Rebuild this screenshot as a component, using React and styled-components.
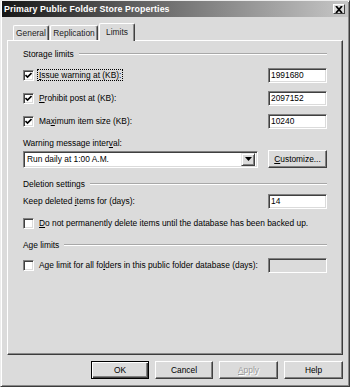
import React from "react";
import styled, { createGlobalStyle } from "styled-components";

const GlobalStyle = createGlobalStyle`
  html, body {
    margin: 0;
    padding: 0;
    background: #d9d9d9;
  }
  body {
    font-family: "Liberation Sans", Arial, sans-serif;
    font-size: 8.4px;
    color: #000;
  }
`;

function App() {
  return (
    <Window>
      <GlobalStyle />
      <TitleBar>
        <Title>Primary Public Folder Store Properties</Title>
        <CloseButton>
          <svg width="8" height="7" viewBox="0 0 8 7">
            <path d="M1 0 L7 7 M7 0 L1 7" stroke="#000" strokeWidth="1.8" />
          </svg>
        </CloseButton>
      </TitleBar>

      <Body>
        <TabStrip>
          <Tab $w={36}>General</Tab>
          <Tab $w={48}>Replication</Tab>
          <Tab $w={36} $active>Limits</Tab>
        </TabStrip>

        <Panel>
          <GroupHeader $top={7}>
            <span>Storage limits</span>
          </GroupHeader>

          <Row $top={7}>
            <CheckBox checked />
            <FocusLabel>
              <u>I</u>ssue warning at (KB):
            </FocusLabel>
            <TextBox>1991680</TextBox>
          </Row>
          <Row $top={7}>
            <CheckBox checked />
            <Label>
              <u>P</u>rohibit post at (KB):
            </Label>
            <TextBox>2097152</TextBox>
          </Row>
          <Row $top={7}>
            <CheckBox checked />
            <Label>
              Ma<u>x</u>imum item size (KB):
            </Label>
            <TextBox>10240</TextBox>
          </Row>

          <Caption $top={8}>
            Warning message inter<u>v</u>al:
          </Caption>
          <Row $top={1} $h={18}>
            <Select>
              <span>Run daily at 1:00 A.M.</span>
              <DropArrow>
                <svg width="7" height="4" viewBox="0 0 7 4">
                  <path d="M0 0 H7 L3.5 4 Z" fill="#000" />
                </svg>
              </DropArrow>
            </Select>
            <Button $w={59}>
              <u>C</u>ustomize...
            </Button>
          </Row>

          <GroupHeader $top={10}>
            <span>Deletion settings</span>
          </GroupHeader>
          <Row $top={3}>
            <Caption>
              Keep deleted <u>i</u>tems for (days):
            </Caption>
            <TextBox>14</TextBox>
          </Row>
          <Row $top={6}>
            <CheckBox />
            <Label>
              <u>D</u>o not permanently delete items until the database has
              been backed up.
            </Label>
          </Row>

          <GroupHeader $top={8}>
            <span>Age limits</span>
          </GroupHeader>
          <Row $top={6}>
            <CheckBox />
            <Label>
              Age limit for all fo<u>l</u>ders in this public folder database
              (days):
            </Label>
            <TextBox $disabled />
          </Row>
        </Panel>

        <ButtonRow>
          <Button $w={58} $default>
            OK
          </Button>
          <Button $w={58}>Cancel</Button>
          <Button $w={59} $disabled>
            <u>A</u>pply
          </Button>
          <Button $w={59}>Help</Button>
        </ButtonRow>
      </Body>
    </Window>
  );
}

function CheckBox({ checked }) {
  return (
    <Check>
      {checked && (
        <svg width="7" height="7" viewBox="0 0 7 7">
          <path d="M0.5 3 L2.5 5 L6.5 1" stroke="#000" strokeWidth="1.6" fill="none" />
        </svg>
      )}
    </Check>
  );
}

export default App;

const Window = styled.div`
  width: 350px;
  height: 387px;
  box-sizing: border-box;
  display: flex;
  flex-direction: column;
  background: #dbdbdb;
  border: 1px solid;
  border-color: #ececec #3c3c3c #3c3c3c #ececec;
  box-shadow: inset 1px 1px 0 #fff, inset -1px -1px 0 #8a8a8a;
`;

const TitleBar = styled.div`
  height: 16px;
  margin: 0 1px;
  display: flex;
  align-items: center;
  justify-content: space-between;
  padding: 0 3px 0 2px;
  background: linear-gradient(to right, #161616 0%, #5a5a5a 35%, #c6c6c6 100%);
`;

const Title = styled.span`
  color: #fff;
  font-weight: bold;
  font-size: 8.8px;
  letter-spacing: 0.1px;
`;

const CloseButton = styled.div`
  width: 12px;
  height: 10px;
  box-sizing: border-box;
  display: flex;
  align-items: center;
  justify-content: center;
  background: #dbdbdb;
  border: 1px solid;
  border-color: #fff #404040 #404040 #fff;
`;

const Body = styled.div`
  flex: 1;
  display: flex;
  flex-direction: column;
  padding: 6px 6px 7px 6px;
`;

const TabStrip = styled.div`
  height: 17px;
  display: flex;
  align-items: flex-end;
  padding-left: 6px;
  position: relative;
  z-index: 1;
`;

const Tab = styled.div`
  width: ${(p) => p.$w}px;
  height: ${(p) => (p.$active ? 18 : 15)}px;
  margin-bottom: ${(p) => (p.$active ? -1 : 0)}px;
  margin-right: 1px;
  box-sizing: border-box;
  display: flex;
  align-items: center;
  justify-content: center;
  padding-bottom: ${(p) => (p.$active ? 2 : 0)}px;
  background: #dbdbdb;
  border: 1px solid;
  border-bottom: none;
  border-color: #fff #404040 #404040 #fff;
  border-radius: 2px 2px 0 0;
  box-shadow: inset -1px 0 0 #8a8a8a;
  color: #222;
`;

const Panel = styled.div`
  flex: 1;
  display: flex;
  flex-direction: column;
  padding: 0 15px;
  border: 1px solid;
  border-color: #fff #3c3c3c #3c3c3c #fff;
  box-shadow: inset -1px -1px 0 #8a8a8a;
`;

const GroupHeader = styled.div`
  height: 12px;
  margin-top: ${(p) => p.$top || 0}px;
  display: flex;
  align-items: center;
  gap: 5px;
  &::after {
    content: "";
    flex: 1;
    height: 0;
    border-top: 1px solid #a8a8a8;
    border-bottom: 1px solid #fff;
  }
`;

const Row = styled.div`
  height: ${(p) => p.$h || 16}px;
  margin-top: ${(p) => p.$top || 0}px;
  display: flex;
  align-items: center;
`;

const Caption = styled.div`
  height: 12px;
  line-height: 12px;
  margin-top: ${(p) => p.$top || 0}px;
  white-space: nowrap;
`;

const Label = styled.span`
  margin-left: 4px;
  padding: 0 1px;
  white-space: nowrap;
`;

const FocusLabel = styled(Label)`
  outline: 1px dotted #000;
  outline-offset: 0;
`;

const Check = styled.div`
  width: 11px;
  height: 11px;
  box-sizing: border-box;
  flex: none;
  display: flex;
  align-items: center;
  justify-content: center;
  background: #fff;
  border: 1px solid;
  border-color: #808080 #fff #fff #808080;
  box-shadow: inset 1px 1px 0 #404040, inset -1px -1px 0 #dbdbdb;
`;

const TextBox = styled.div`
  width: 59px;
  height: 15px;
  box-sizing: border-box;
  margin-left: auto;
  flex: none;
  display: flex;
  align-items: center;
  padding-left: 2px;
  background: ${(p) => (p.$disabled ? "#dbdbdb" : "#fff")};
  border: 1px solid;
  border-color: #808080 #fff #fff #808080;
  box-shadow: inset 1px 1px 0 #404040, inset -1px -1px 0 #dbdbdb;
`;

const Select = styled.div`
  width: 235px;
  height: 17px;
  box-sizing: border-box;
  display: flex;
  align-items: center;
  justify-content: space-between;
  padding: 0 2px 0 3px;
  background: #fff;
  border: 1px solid;
  border-color: #808080 #fff #fff #808080;
  box-shadow: inset 1px 1px 0 #404040, inset -1px -1px 0 #dbdbdb;
`;

const DropArrow = styled.div`
  width: 14px;
  height: 13px;
  box-sizing: border-box;
  display: flex;
  align-items: center;
  justify-content: center;
  background: #dbdbdb;
  border: 1px solid;
  border-color: #e8e8e8 #404040 #404040 #e8e8e8;
  box-shadow: inset 1px 1px 0 #fff, inset -1px -1px 0 #808080;
`;

const Button = styled.div`
  width: ${(p) => p.$w}px;
  height: 18px;
  box-sizing: border-box;
  margin-left: auto;
  flex: none;
  display: flex;
  align-items: center;
  justify-content: center;
  background: #dbdbdb;
  border: 1px solid;
  border-color: ${(p) => (p.$default ? "#000" : "#fff #404040 #404040 #fff")};
  box-shadow: ${(p) =>
    p.$default
      ? "inset 1px 1px 0 #fff, inset -1px -1px 0 #404040, inset -2px -2px 0 #808080"
      : "inset -1px -1px 0 #808080"};
  color: ${(p) => (p.$disabled ? "#9a9a9a" : "#000")};
  text-shadow: ${(p) => (p.$disabled ? "1px 1px 0 #fff" : "none")};
`;

const ButtonRow = styled.div`
  height: 18px;
  margin-top: 6px;
  display: flex;
  justify-content: flex-end;
  gap: 6px;
  & > * {
    margin-left: 0;
  }
`;
